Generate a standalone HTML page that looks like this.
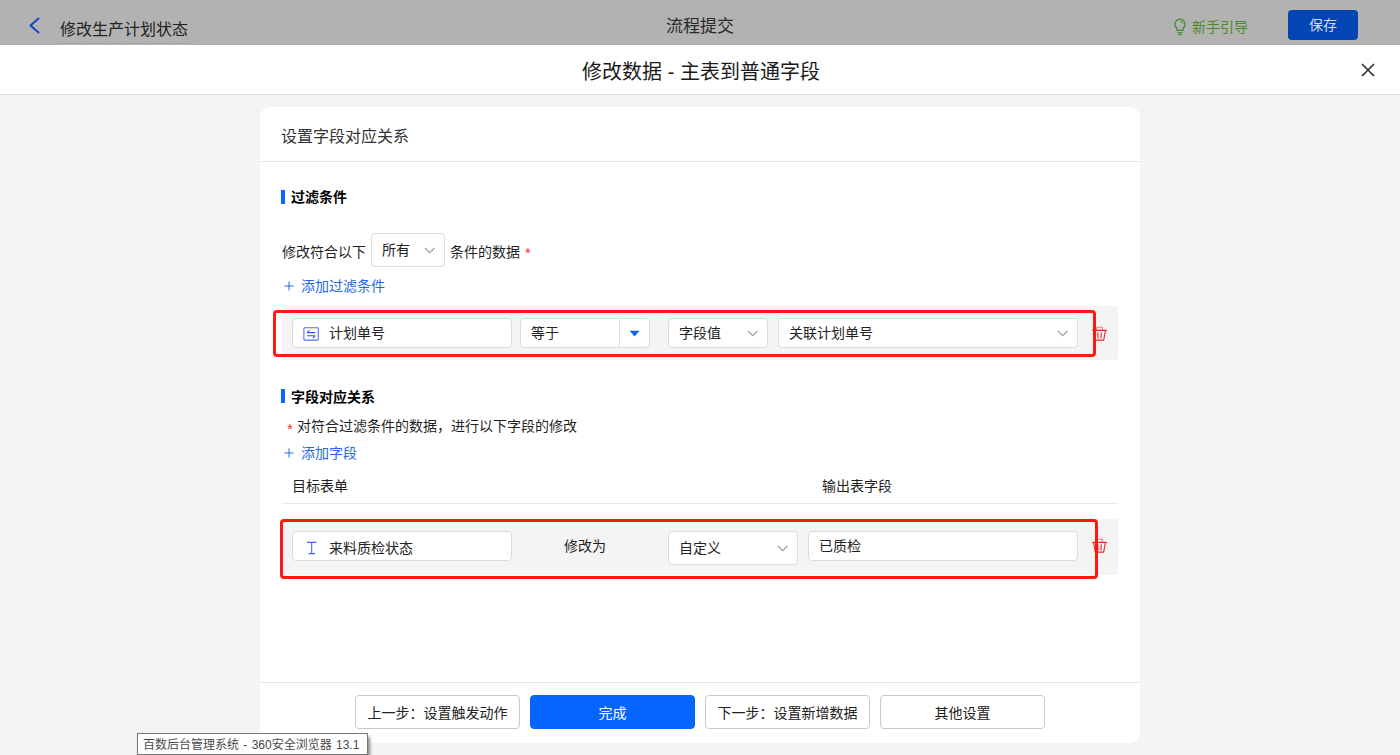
<!DOCTYPE html>
<html lang="zh-CN">
<head>
<meta charset="utf-8">
<title>修改数据 - 主表到普通字段</title>
<style>
*{box-sizing:border-box;margin:0;padding:0}
html,body{width:1400px;height:755px;overflow:hidden;background:#f4f4f4}
body{font-family:"Liberation Sans","Noto Sans CJK SC",sans-serif;font-size:14px;color:#1f1f1f;position:relative}
.abs{position:absolute;white-space:nowrap}
#topbar{left:0;top:0;width:1400px;height:45px;background:#b2b2b2}
#tb-title{left:58px;top:19px;font-size:16px;line-height:22px;color:#222;border-bottom:1px dashed #a2a2a2;padding:0 6px 2px 2px;height:25px}
#tb-center{left:666px;top:16px;font-size:17px;line-height:22px;color:#2a2a2a}
#guide{left:1192px;top:17px;font-size:14px;line-height:20px;color:#4a8a2c}
#save{left:1288px;top:10px;width:70px;height:30px;background:#0345b5;border-radius:4px;color:#d4dcec;font-size:14px;line-height:31px;text-align:center}
#header{left:0;top:45px;width:1400px;height:50px;background:#fff;border-bottom:1px solid #e2e2e2}
#h-title{left:1px;top:59px;width:1400px;text-align:center;font-size:20px;line-height:26px;color:#1a1a1a}
#card{left:260px;top:107px;width:880px;height:636px;background:#fff;border-radius:10px}
#card-title{left:281px;top:126px;font-size:16px;line-height:22px;color:#333}
#card-line{left:260px;top:161px;width:880px;height:1px;background:#e8e8e8}
.sec{font-size:14px;font-weight:bold;line-height:18px;color:#000}
.bar{width:4px;height:14px;background:#0a66ff}
.link{color:#2468e6;font-size:14px;line-height:20px}
.row{background:#f4f4f4}
.inp{background:#fff;border:1px solid #dcdcdc;border-radius:4px;font-size:14px;line-height:28px;color:#222}
.redbox{z-index:5;border:3px solid #fc1a0e;border-radius:4px}
.btn{background:#fff;border:1px solid #c9c9c9;border-radius:4px;height:34px;line-height:32px;padding-top:1px;text-align:center;font-size:14px;color:#222;width:165px}
#done{background:#0566ff;border-color:#0566ff;color:#fff}
#foot-line{left:260px;top:682px;width:880px;height:1px;background:#e6e6e6}
#tip{left:137px;top:733px;width:231px;height:22px;background:#fff;border:1px solid #767676;font-size:12px;line-height:22px;color:#4a4a4a;padding-left:5px;word-spacing:1px;box-shadow:2px 4px 3px rgba(0,0,0,.45)}
</style>
</head>
<body>
<div id="topbar" class="abs"></div>
<svg class="abs" style="left:27px;top:16px" width="16" height="20" viewBox="0 0 16 20"><path d="M11.5 2.5 L3.5 9.5 L11.5 16.5" fill="none" stroke="#1447c8" stroke-width="2" stroke-linecap="round" stroke-linejoin="round"/></svg>
<div id="tb-title" class="abs">修改生产计划状态</div>
<div id="tb-center" class="abs">流程提交</div>
<svg class="abs" style="left:1173px;top:18px" width="14" height="18" viewBox="0 0 14 18"><path d="M7 1.2a5 5 0 0 0-3 9v2.2h6v-2.2a5 5 0 0 0-3-9z" fill="none" stroke="#4a8a2c" stroke-width="1.3"/><path d="M4.6 14.6h4.8M5.4 16.6h3.2M7.3 3.2a3 3 0 0 1 2.6 2.4" stroke="#4a8a2c" stroke-width="1.1" fill="none"/></svg>
<div id="guide" class="abs">新手引导</div>
<div id="save" class="abs">保存</div>

<div id="header" class="abs"></div>
<div id="h-title" class="abs">修改数据 - 主表到普通字段</div>
<svg class="abs" style="left:1360px;top:62px" width="16" height="16" viewBox="0 0 16 16"><path d="M2 2 L14 14 M14 2 L2 14" stroke="#333" stroke-width="1.7" fill="none"/></svg>

<div id="card" class="abs"></div>
<div id="card-title" class="abs">设置字段对应关系</div>
<div id="card-line" class="abs"></div>

<!-- filter section -->
<div class="abs bar" style="left:281px;top:190px"></div>
<div class="abs sec" style="left:291px;top:188px">过滤条件</div>
<div class="abs" style="left:282px;top:242px;line-height:20px">修改符合以下</div>
<div class="abs inp" style="left:371px;top:233px;width:74px;height:34px;line-height:32px;padding-left:10px">所有</div>
<svg class="abs" style="left:424px;top:247px" width="12" height="8" viewBox="0 0 12 8"><path d="M1 1 L5.7 5.7 L10.4 1" fill="none" stroke="#9a9da6" stroke-width="1.1"/></svg>
<div class="abs" style="left:450px;top:242px;line-height:20px">条件的数据</div><div class="abs" style="left:525px;top:243px;line-height:20px;color:#f0302a;font-size:15px">*</div>
<svg class="abs" style="left:284px;top:281px" width="10" height="10" viewBox="0 0 10 10"><path d="M5 0.5v9M0.5 5h9" stroke="#2a6be8" stroke-width="1" fill="none"/></svg>
<div class="abs link" style="left:301px;top:276px">添加过滤条件</div>

<div class="abs row" style="left:282px;top:306px;width:836px;height:54px;border-radius:2px"></div>
<div class="abs inp" style="left:292px;top:318px;width:220px;height:30px;padding-left:36px">计划单号</div>
<svg class="abs" style="left:303px;top:327px" width="16" height="14" viewBox="0 0 16 14"><rect x="0.9" y="0.7" width="14.4" height="12.4" rx="0.9" fill="none" stroke="#5468ff" stroke-width="1.05"/><path d="M4 5.6h8.3M4 8.7h8.3M6.4 3.3 4 5.6M9.9 11 12.3 8.7" stroke="#2b5cff" stroke-width="1.1" fill="none"/></svg>
<div class="abs inp" style="left:520px;top:318px;width:130px;height:30px;padding-left:10px">等于</div>
<div class="abs" style="left:619px;top:319px;width:1px;height:28px;background:#dcdcdc"></div>
<svg class="abs" style="left:629px;top:330px" width="12" height="8" viewBox="0 0 12 8"><path d="M0.6 0.8 L5.6 6.6 L10.6 0.8 Z" fill="#0a63ff"/></svg>
<div class="abs inp" style="left:668px;top:318px;width:100px;height:30px;padding-left:10px">字段值</div>
<svg class="abs" style="left:747px;top:330px" width="12" height="8" viewBox="0 0 12 8"><path d="M1 1 L5.7 5.7 L10.4 1" fill="none" stroke="#9a9da6" stroke-width="1.1"/></svg>
<div class="abs inp" style="left:778px;top:318px;width:300px;height:30px;padding-left:10px">关联计划单号</div>
<svg class="abs" style="left:1057px;top:330px" width="12" height="8" viewBox="0 0 12 8"><path d="M1 1 L5.7 5.7 L10.4 1" fill="none" stroke="#9a9da6" stroke-width="1.1"/></svg>
<div class="abs redbox" style="left:273px;top:310px;width:823px;height:47px"></div>
<svg class="abs trash" style="left:1092px;top:326px" width="15" height="15" viewBox="0 0 15 15"><path d="M4.6 4.3v-2.2q0-.8.8-.8h4.2q.8 0 .8.8v2.2" fill="none" stroke="#f77" stroke-width="1.1"/><path d="M0.2 4.4h14.6M1.6 4.4l1.7 9.7h8.4l1.7-9.7M5.7 6.4l.4 6M9.3 6.4l-.4 6" fill="none" stroke="#f5222d" stroke-width="1.1"/></svg>

<!-- mapping section -->
<div class="abs bar" style="left:281px;top:389px"></div>
<div class="abs sec" style="left:291px;top:388px">字段对应关系</div>
<div class="abs" style="left:287px;top:419px;line-height:20px;color:#f0302a;font-size:15px">*</div><div class="abs" style="left:297px;top:416px;line-height:20px">对符合过滤条件的数据，进行以下字段的修改</div>
<svg class="abs" style="left:284px;top:448px" width="10" height="10" viewBox="0 0 10 10"><path d="M5 0.5v9M0.5 5h9" stroke="#2a6be8" stroke-width="1" fill="none"/></svg>
<div class="abs link" style="left:301px;top:443px">添加字段</div>
<div class="abs" style="left:292px;top:476px;line-height:20px">目标表单</div>
<div class="abs" style="left:822px;top:476px;line-height:20px">输出表字段</div>
<div class="abs" style="left:282px;top:503px;width:836px;height:1px;background:#e8e8e8"></div>

<div class="abs row" style="left:282px;top:519px;width:836px;height:56px;border-radius:2px"></div>
<div class="abs inp" style="left:292px;top:531px;width:220px;height:30px;padding-left:36px;line-height:33px">来料质检状态</div>
<svg class="abs" style="left:306px;top:541px" width="12" height="14" viewBox="0 0 12 14"><path d="M1 1.4h9.4M5.7 1.4v11M2.6 12.6h6.4" stroke="#4a5cff" stroke-width="1.1" fill="none"/></svg>
<div class="abs" style="left:564px;top:536px;line-height:20px">修改为</div>
<div class="abs inp" style="left:668px;top:531px;width:130px;height:34px;line-height:32px;padding-left:10px">自定义</div>
<svg class="abs" style="left:777px;top:545px" width="12" height="8" viewBox="0 0 12 8"><path d="M1 1 L5.7 5.7 L10.4 1" fill="none" stroke="#9a9da6" stroke-width="1.1"/></svg>
<div class="abs inp" style="left:808px;top:531px;width:270px;height:30px;padding-left:10px">已质检</div>
<div class="abs redbox" style="left:280px;top:519px;width:818px;height:60px"></div>
<svg class="abs trash" style="left:1092px;top:538px" width="15" height="15" viewBox="0 0 15 15"><path d="M4.6 4.3v-2.2q0-.8.8-.8h4.2q.8 0 .8.8v2.2" fill="none" stroke="#f77" stroke-width="1.1"/><path d="M0.2 4.4h14.6M1.6 4.4l1.7 9.7h8.4l1.7-9.7M5.7 6.4l.4 6M9.3 6.4l-.4 6" fill="none" stroke="#f5222d" stroke-width="1.1"/></svg>

<!-- footer -->
<div id="foot-line" class="abs"></div>
<div class="abs btn" style="left:355px;top:695px">上一步：设置触发动作</div>
<div class="abs btn" id="done" style="left:530px;top:695px">完成</div>
<div class="abs btn" style="left:705px;top:695px">下一步：设置新增数据</div>
<div class="abs btn" style="left:880px;top:695px">其他设置</div>

<div id="tip" class="abs">百数后台管理系统 - 360安全浏览器 13.1</div>
</body>
</html>
